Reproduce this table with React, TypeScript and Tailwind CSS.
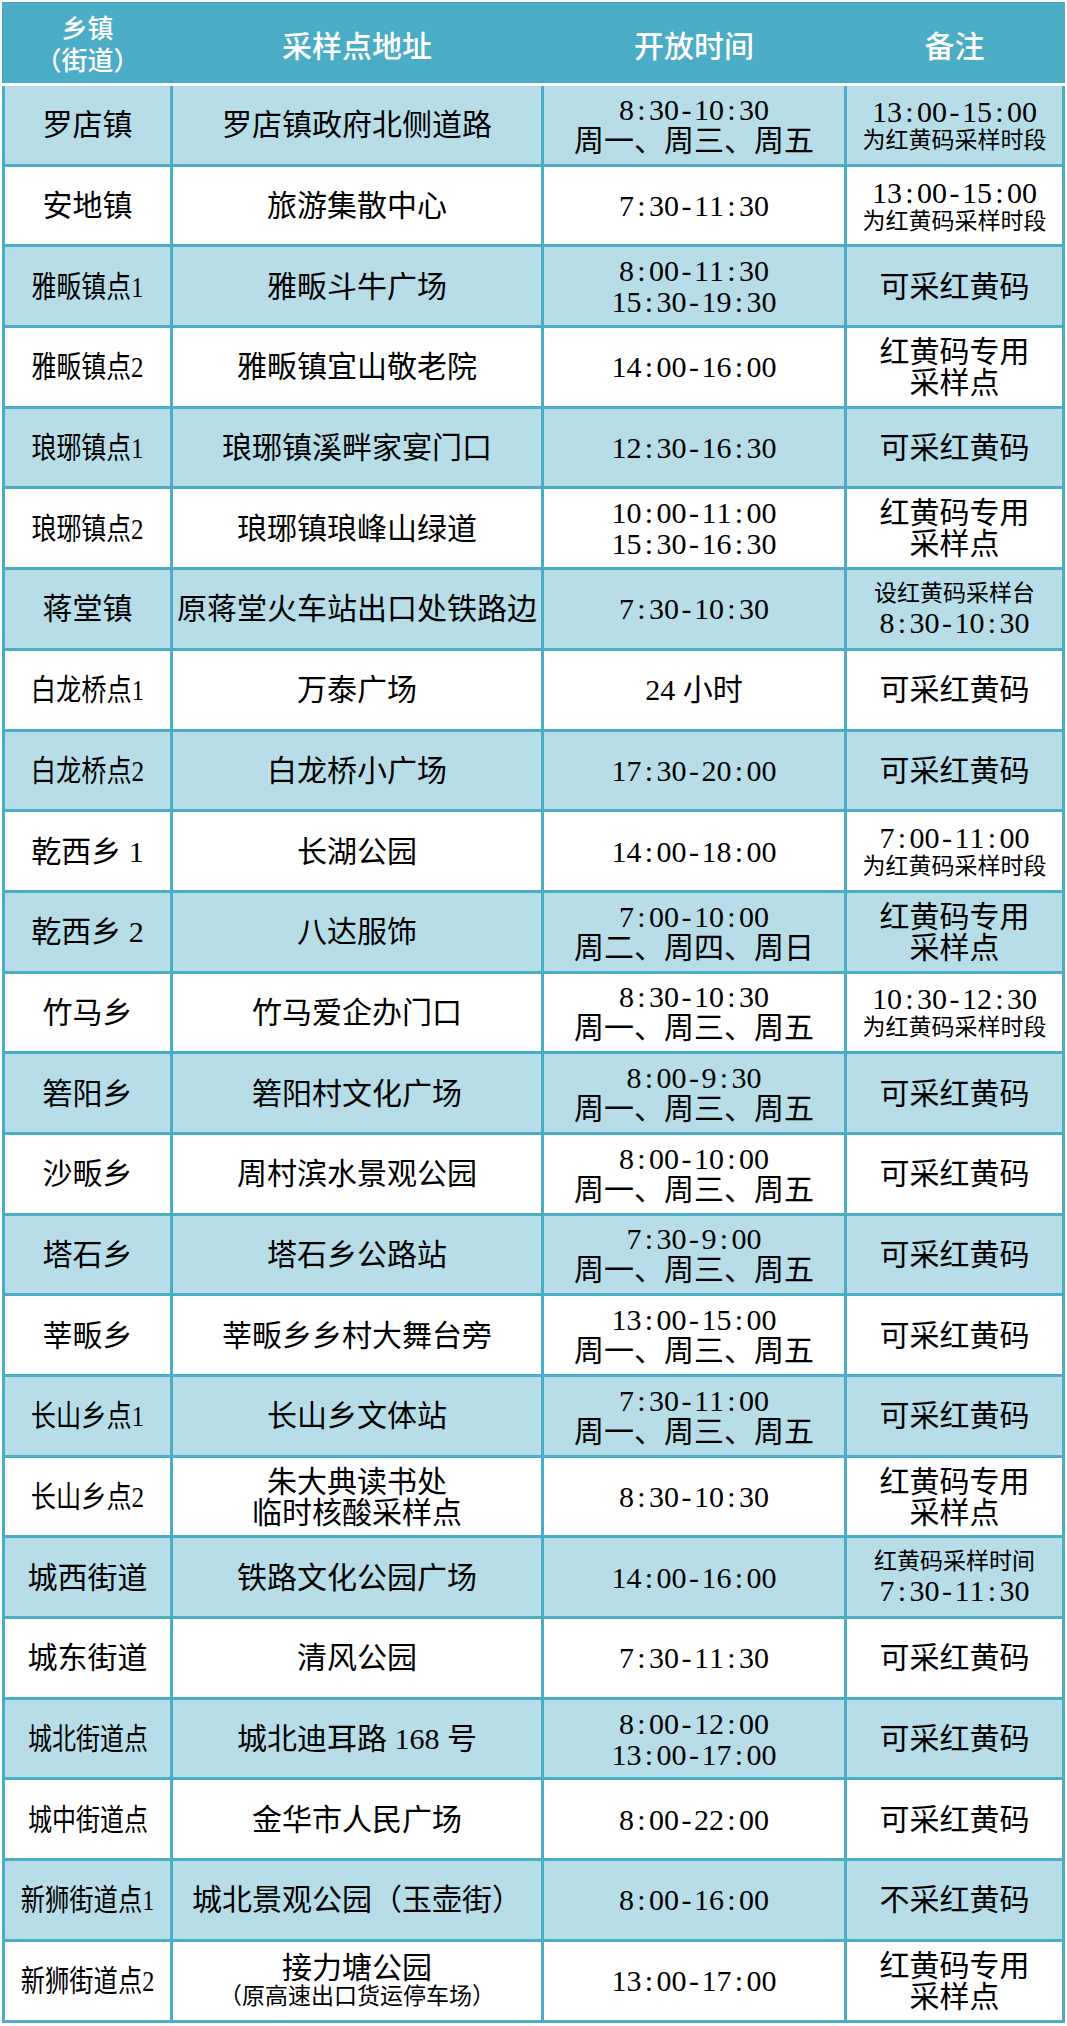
import React from 'react';

type Row = { a: string[]; b: string[]; c: string[]; d: string[]; sx?: string };

const rows: Row[] = [
  { a: ['罗店镇'], b: ['罗店镇政府北侧道路'], c: ['8:30-10:30', '周一、周三、周五'], d: ['13:00-15:00', '~为红黄码采样时段'] },
  { a: ['安地镇'], b: ['旅游集散中心'], c: ['7:30-11:30'], d: ['13:00-15:00', '~为红黄码采样时段'] },
  { a: ['雅畈镇点1'], b: ['雅畈斗牛广场'], c: ['8:00-11:30', '15:30-19:30'], d: ['可采红黄码'], sx: 'scale-x-[0.83]' },
  { a: ['雅畈镇点2'], b: ['雅畈镇宜山敬老院'], c: ['14:00-16:00'], d: ['红黄码专用', '采样点'], sx: 'scale-x-[0.83]' },
  { a: ['琅琊镇点1'], b: ['琅琊镇溪畔家宴门口'], c: ['12:30-16:30'], d: ['可采红黄码'], sx: 'scale-x-[0.83]' },
  { a: ['琅琊镇点2'], b: ['琅琊镇琅峰山绿道'], c: ['10:00-11:00', '15:30-16:30'], d: ['红黄码专用', '采样点'], sx: 'scale-x-[0.83]' },
  { a: ['蒋堂镇'], b: ['原蒋堂火车站出口处铁路边'], c: ['7:30-10:30'], d: ['~设红黄码采样台', '8:30-10:30'] },
  { a: ['白龙桥点1'], b: ['万泰广场'], c: ['24 小时'], d: ['可采红黄码'], sx: 'scale-x-[0.84]' },
  { a: ['白龙桥点2'], b: ['白龙桥小广场'], c: ['17:30-20:00'], d: ['可采红黄码'], sx: 'scale-x-[0.84]' },
  { a: ['乾西乡 1'], b: ['长湖公园'], c: ['14:00-18:00'], d: ['7:00-11:00', '~为红黄码采样时段'] },
  { a: ['乾西乡 2'], b: ['八达服饰'], c: ['7:00-10:00', '周二、周四、周日'], d: ['红黄码专用', '采样点'] },
  { a: ['竹马乡'], b: ['竹马爱企办门口'], c: ['8:30-10:30', '周一、周三、周五'], d: ['10:30-12:30', '~为红黄码采样时段'] },
  { a: ['箬阳乡'], b: ['箬阳村文化广场'], c: ['8:00-9:30', '周一、周三、周五'], d: ['可采红黄码'] },
  { a: ['沙畈乡'], b: ['周村滨水景观公园'], c: ['8:00-10:00', '周一、周三、周五'], d: ['可采红黄码'] },
  { a: ['塔石乡'], b: ['塔石乡公路站'], c: ['7:30-9:00', '周一、周三、周五'], d: ['可采红黄码'] },
  { a: ['莘畈乡'], b: ['莘畈乡乡村大舞台旁'], c: ['13:00-15:00', '周一、周三、周五'], d: ['可采红黄码'] },
  { a: ['长山乡点1'], b: ['长山乡文体站'], c: ['7:30-11:00', '周一、周三、周五'], d: ['可采红黄码'], sx: 'scale-x-[0.84]' },
  { a: ['长山乡点2'], b: ['朱大典读书处', '临时核酸采样点'], c: ['8:30-10:30'], d: ['红黄码专用', '采样点'], sx: 'scale-x-[0.84]' },
  { a: ['城西街道'], b: ['铁路文化公园广场'], c: ['14:00-16:00'], d: ['~红黄码采样时间', '7:30-11:30'] },
  { a: ['城东街道'], b: ['清风公园'], c: ['7:30-11:30'], d: ['可采红黄码'] },
  { a: ['城北街道点'], b: ['城北迪耳路 168 号'], c: ['8:00-12:00', '13:00-17:00'], d: ['可采红黄码'], sx: 'scale-x-[0.8]' },
  { a: ['城中街道点'], b: ['金华市人民广场'], c: ['8:00-22:00'], d: ['可采红黄码'], sx: 'scale-x-[0.8]' },
  { a: ['新狮街道点1'], b: ['城北景观公园（玉壶街）'], c: ['8:00-16:00'], d: ['不采红黄码'], sx: 'scale-x-[0.81]' },
  { a: ['新狮街道点2'], b: ['接力塘公园', '~（原高速出口货运停车场）'], c: ['13:00-17:00'], d: ['红黄码专用', '采样点'], sx: 'scale-x-[0.81]' },
];

function T({ s }: { s: string }) {
  return (
    <>
      {Array.from(s).map((ch, i) =>
        ch === ' ' ? (
          <span key={i} className="inline-block w-[0.25em]">
            {'\u00a0'}
          </span>
        ) : ch.charCodeAt(0) < 128 ? (
          <span key={i} className="inline-block w-[0.5em] text-center">
            {ch}
          </span>
        ) : (
          <span key={i}>{ch}</span>
        )
      )}
    </>
  );
}

function Lines({ lines }: { lines: string[] }) {
  return (
    <>
      {lines.map((l, i) =>
        l.startsWith('~') ? (
          <div key={i} className="text-[23px] leading-[27px] whitespace-nowrap">
            <T s={l.slice(1)} />
          </div>
        ) : (
          <div key={i} className="text-[30px] leading-[31px] whitespace-nowrap">
            <T s={l} />
          </div>
        )
      )}
    </>
  );
}

export default function App() {
  return (
    <div className="w-[1067px] h-[2026px] bg-white pt-[2px] pl-[2px] font-['Liberation_Serif','Noto_Sans_CJK_SC',serif] text-black">
      <div className="w-[1063px] h-[81px] bg-[#4bacc6] px-[3px] grid grid-cols-[165px_368px_300px_215px] gap-x-[3px] text-white font-['Noto_Sans_CJK_SC',sans-serif] font-medium">
        <div className="flex flex-col items-center justify-center text-[26px] leading-[32px]">
          <div>乡镇</div>
          <div>（街道）</div>
        </div>
        <div className="flex items-center justify-center text-[30px] pt-[3px]">采样点地址</div>
        <div className="flex items-center justify-center text-[30px] pt-[3px]">开放时间</div>
        <div className="flex items-center justify-center text-[30px] pt-[3px]">备注</div>
      </div>
      <div className="mt-[3px] w-[1063px] bg-[#4bacc6] px-[3px] pb-[3px] grid grid-cols-[165px_368px_300px_215px] auto-rows-[77.7px] gap-[3px]">
        {rows.map((r, i) => {
          const bg = i % 2 === 0 ? 'bg-[#b7dde8]' : 'bg-white';
          return (
            <React.Fragment key={i}>
              <div className={`${bg} flex items-center justify-center text-[30px] leading-[31px] whitespace-nowrap`}>
                <span className={`inline-block ${r.sx ?? ''}`}>
                  <T s={r.a[0]} />
                </span>
              </div>
              <div className={`${bg} flex flex-col items-center justify-center`}>
                <Lines lines={r.b} />
              </div>
              <div className={`${bg} flex flex-col items-center justify-center`}>
                <Lines lines={r.c} />
              </div>
              <div className={`${bg} flex flex-col items-center justify-center`}>
                <Lines lines={r.d} />
              </div>
            </React.Fragment>
          );
        })}
      </div>
    </div>
  );
}
